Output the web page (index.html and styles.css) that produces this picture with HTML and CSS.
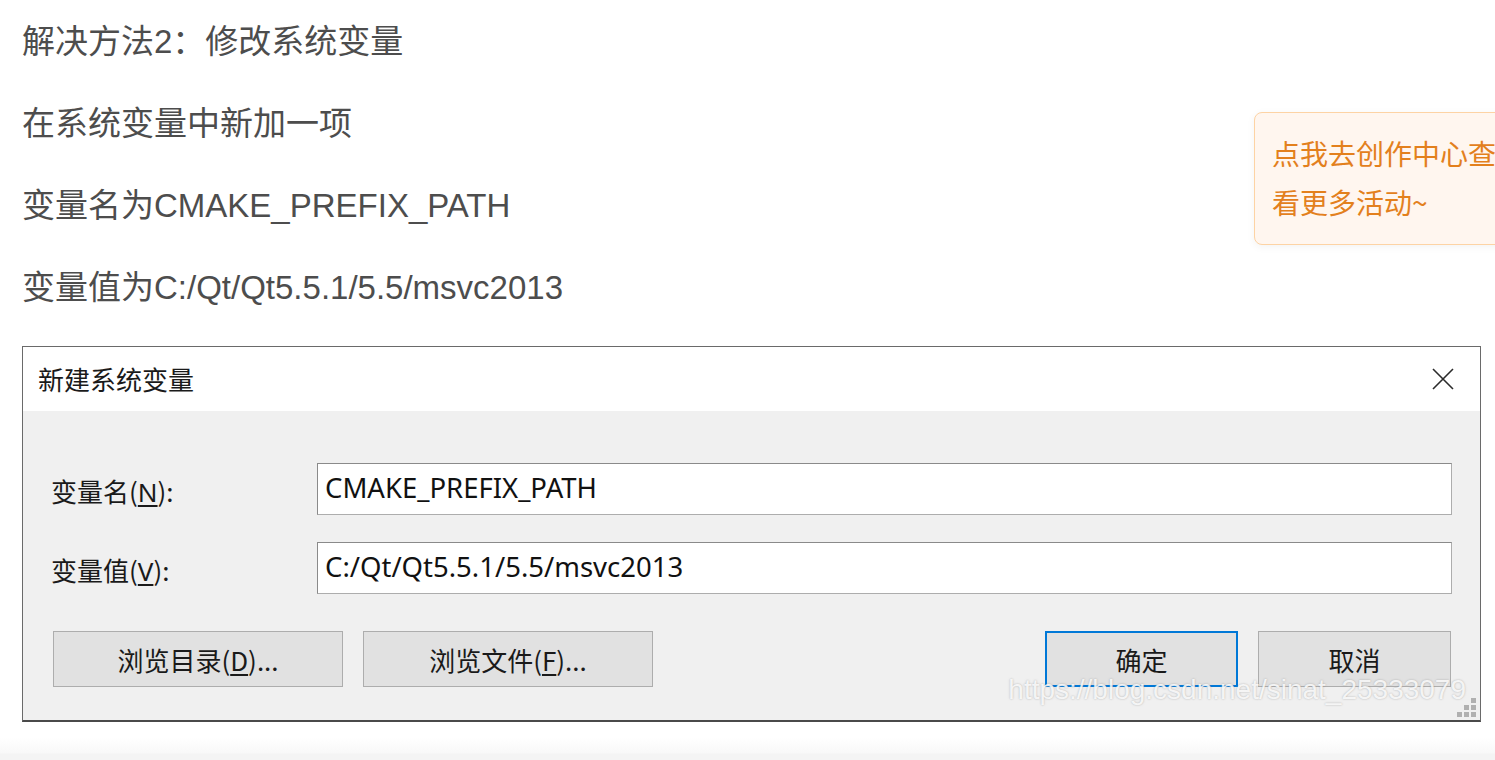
FILE: index.html
```html
<!DOCTYPE html>
<html lang="zh-CN">
<head>
<meta charset="utf-8">
<title>修改系统变量</title>
<link rel="stylesheet" href="styles.css">
</head>
<body>
<div class="page">
  <div class="article">
    <p class="para">解决方法2：修改系统变量</p>
    <p class="para">在系统变量中新加一项</p>
    <p class="para">变量名为CMAKE_PREFIX_PATH</p>
    <p class="para last">变量值为C:/Qt/Qt5.5.1/5.5/msvc2013</p>

    <div class="dialog">
      <div class="titlebar">
        <span class="title">新建系统变量</span>
        <svg class="close" width="24" height="22" viewBox="0 0 24 22">
          <path d="M2 1 L22 21 M22 1 L2 21" stroke="#2b2b2b" stroke-width="1.6" fill="none"/>
        </svg>
      </div>
      <div class="dbody">
        <div class="frow">
          <span class="label">变量名(<u>N</u>):</span>
          <div class="input">CMAKE_PREFIX_PATH</div>
        </div>
        <div class="frow">
          <span class="label">变量值(<u>V</u>):</span>
          <div class="input">C:/Qt/Qt5.5.1/5.5/msvc2013</div>
        </div>
        <div class="btnrow">
          <div class="btngroup">
            <div class="btn wide">浏览目录(<u>D</u>)...</div>
            <div class="btn wide">浏览文件(<u>F</u>)...</div>
          </div>
          <div class="btngroup">
            <div class="btn narrow primary">确定</div>
            <div class="btn narrow">取消</div>
          </div>
        </div>
      </div>
      <div class="watermark">https://blog.csdn.net/sinat_25333079</div>
      <div class="grip">
        <i class="g g1"></i>
        <i class="g g2"></i><i class="g g3"></i>
        <i class="g g4"></i><i class="g g5"></i><i class="g g6"></i>
      </div>
    </div>
  </div>
  <div class="footband"></div>

  <div class="promo">点我去创作中心查看更多活动~</div>
</div>
</body>
</html>
```

FILE: styles.css
```css
html, body {
  margin: 0;
  padding: 0;
  background: #ffffff;
  overflow: hidden;
}
.page {
  position: relative;
  width: 1495px;
  height: 760px;
  overflow: hidden;
}
.article {
  padding: 17px 0 0 22px;
}
.para {
  margin: 0 0 32px 0;
  font-family: "Liberation Sans", "Noto Sans CJK SC", sans-serif;
  font-size: 33px;
  line-height: 50px;
  color: #4d4d4d;
}
.para.last {
  margin-bottom: 33px;
}
.dialog {
  position: relative;
  width: 1457px;
  border: 1px solid #6a6a6a;
  border-bottom: 2px solid #4a4a4a;
  background: #f0f0f0;
  font-family: "Noto Sans", "Noto Sans CJK SC", sans-serif;
  color: #1a1a1a;
}
.titlebar {
  height: 64px;
  background: #ffffff;
  display: flex;
  align-items: center;
  justify-content: space-between;
  padding: 0 25px 0 15px;
}
.title {
  font-size: 26px;
  line-height: 34px;
  font-family: "Noto Sans CJK SC", sans-serif;
  color: #1a1a1a;
}
.close {
  display: block;
}
.dbody {
  padding: 52px 28px 33px 28px;
}
.frow {
  display: flex;
  align-items: center;
  height: 52px;
  margin-bottom: 27px;
}
.label {
  width: 266px;
  font-size: 26px;
  line-height: 34px;
  padding-top: 4px;
  font-family: "Noto Sans CJK SC", sans-serif;
}
.label u {
  font-family: "Noto Sans", sans-serif;
  text-underline-offset: 3px;
}
.input {
  flex: 1;
  height: 50px;
  border: 1px solid #8a8a8a;
  border-color: #8a8a8a #adadad #adadad #8a8a8a;
  background: #ffffff;
  font-size: 27.5px;
  line-height: 47px;
  padding: 0 7px;
  color: #111;
}
.btnrow {
  display: flex;
  justify-content: space-between;
  margin-top: 37px;
  padding: 0 1px 0 2px;
}
.btngroup {
  display: flex;
  gap: 20px;
}
.btn {
  height: 54px;
  background: #e1e1e1;
  border: 1px solid #adadad;
  display: flex;
  align-items: center;
  justify-content: center;
  font-family: "Noto Sans CJK SC", sans-serif;
  font-size: 26px;
  color: #1a1a1a;
}
.btn u {
  text-underline-offset: 3px;
}
.btn.wide {
  width: 288px;
}
.btn.narrow {
  width: 191px;
}
.btn.primary {
  border: 2px solid #0078d7;
  width: 189px;
  height: 52px;
}
.watermark {
  position: absolute;
  right: 14px;
  bottom: 14px;
  font-family: "Liberation Sans", sans-serif;
  font-size: 28px;
  color: rgba(255, 255, 255, 0.85);
  text-shadow: 0 0 2px rgba(120, 120, 120, 0.55);
  pointer-events: none;
}
.grip {
  position: absolute;
  right: 4px;
  bottom: 3px;
  width: 19px;
  height: 19px;
}
.g {
  position: absolute;
  width: 5px;
  height: 5px;
  background: #b0b0b0;
}
.g1 { right: 0; top: 0; }
.g2 { right: 7px; top: 7px; }
.g3 { right: 0; top: 7px; }
.g4 { right: 14px; top: 14px; }
.g5 { right: 7px; top: 14px; }
.g6 { right: 0; top: 14px; }
.footband {
  height: 40px;
  background: linear-gradient(to bottom, #ffffff 0px, #ffffff 16px, #f8f8f8 31px, #f4f4f4 32px, #f4f4f4 40px);
}
.promo {
  position: absolute;
  left: 1254px;
  top: 112px;
  width: 236px;
  padding: 16px 17px 17px 17px;
  border: 1px solid #fdd3a4;
  border-radius: 8px;
  background: #fff6ef;
  box-shadow: 0 2px 8px rgba(0, 0, 0, 0.05);
  font-family: "Noto Sans CJK SC", sans-serif;
  font-size: 28px;
  line-height: 49px;
  color: #e3801d;
}
```
